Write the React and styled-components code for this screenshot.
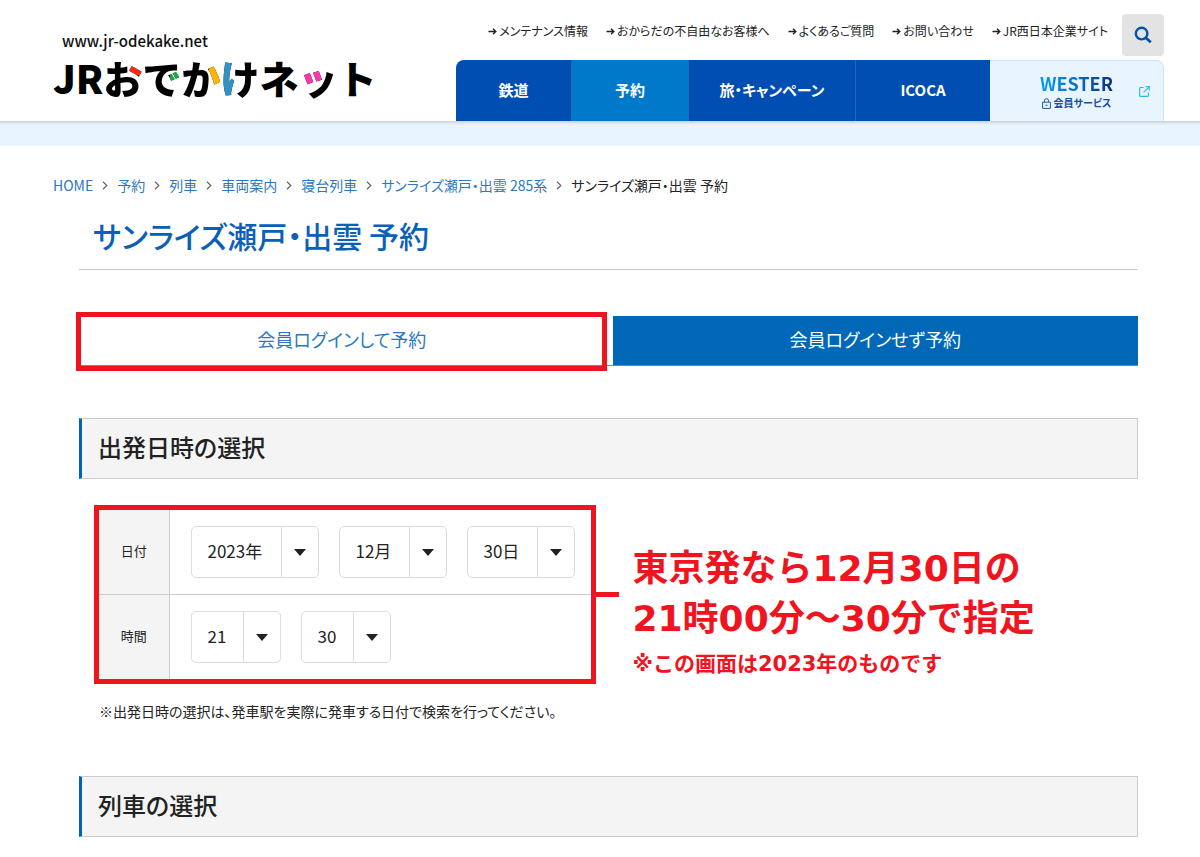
import React, { useState } from "react";
import styled, { createGlobalStyle, css } from "styled-components";

const utilityLinks = [
    "メンテナンス情報",
    "おからだの不自由なお客様へ",
    "よくあるご質問",
    "お問い合わせ",
    "JR西日本企業サイト",
];

const navItems = ["鉄道", "予約", "旅・キャンペーン", "ICOCA"];

const crumbs = [
    "HOME",
    "予約",
    "列車",
    "車両案内",
    "寝台列車",
    "サンライズ瀬戸・出雲 285系",
];

// each accent colours one stroke of its letter
const logoLetters = [
    { text: "JR" },
    { text: "お", color: "#ff2a12", place: "100% 0 / 34% 20px" },
    { text: "で", color: "#18b04a", place: "100% 17px / 28% 15px" },
    { text: "か", color: "#ffb400", place: "100% 0 / 30% 32px" },
    { text: "け", color: "#3292c4", place: "0 0 / 36% 100%" },
    { text: "ネ" },
    { text: "ッ", color: "#fb37b0", place: "0 0 / 58% 29px" },
    { text: "ト" },
];

const SmallArrow = () => (
    <svg width="9" height="9" viewBox="0 0 9 9" fill="none" aria-hidden="true">
        <path
            d="M0.5 4.5H8M5 1.8L7.8 4.5L5 7.2"
            stroke="#222"
            strokeWidth="1.4"
        />
    </svg>
);

const SearchIcon = () => (
    <svg width="18" height="18" viewBox="0 0 18 18" fill="none">
        <circle cx="7.6" cy="7.6" r="5.8" stroke="#0050b4" strokeWidth="2.4" />
        <path d="M12 12L16.8 16.2" stroke="#0050b4" strokeWidth="2.8" />
    </svg>
);

const LockIcon = () => (
    <svg width="9" height="11" viewBox="0 0 9 11" fill="none">
        <path
            d="M2.4 4V2.8a2.1 2.1 0 0 1 4.2 0V4M0.6 4.2H8.4V10.4H0.6ZM3.4 7.3H5.6"
            stroke="#1c5aa8"
        />
    </svg>
);

const ExternalIcon = () => (
    <svg width="11" height="11" viewBox="0 0 11 11" fill="none">
        <path
            d="M4.6 1.5H1.6a1 1 0 0 0-1 1V9.4a1 1 0 0 0 1 1H8.4a1 1 0 0 0 1-1V6.4M6.5 0.7H10.3V4.5M10.2 0.8L4.6 6.4"
            stroke="#2bbdf0"
            strokeWidth="1.2"
        />
    </svg>
);

const Chevron = () => (
    <svg width="6" height="9" viewBox="0 0 6 9" fill="none" aria-hidden="true">
        <path d="M1 0.8L4.8 4.5L1 8.2" stroke="#666" strokeWidth="1.2" />
    </svg>
);

function SelectBox({ label, size, value, options }) {
    const [current, setCurrent] = useState(value);

    return (
        <SelectWrap $size={size}>
            <Select
                aria-label={label}
                value={current}
                onChange={(e) => setCurrent(e.target.value)}
            >
                {options.map((option) => (
                    <option key={option}>{option}</option>
                ))}
            </Select>
            <SelectArrow aria-hidden="true">
                <svg width="12" height="7" viewBox="0 0 12 7">
                    <path d="M0 0H12L6 7Z" fill="#222" />
                </svg>
            </SelectArrow>
        </SelectWrap>
    );
}

function App() {
    return (
        <>
            <GlobalStyle />
            <Header>
                <LogoLink href="#">
                    <LogoUrl>www.jr-odekake.net</LogoUrl>
                    <LogoName>
                        {logoLetters.map((letter) => (
                            <LogoLetter
                                key={letter.text}
                                $color={letter.color}
                                $place={letter.place}
                            >
                                {letter.text}
                            </LogoLetter>
                        ))}
                    </LogoName>
                </LogoLink>
                <HeaderRight>
                    <UtilityBar>
                        <UtilityList>
                            {utilityLinks.map((text) => (
                                <UtilityLink href="#" key={text}>
                                    <SmallArrow />
                                    {text}
                                </UtilityLink>
                            ))}
                        </UtilityList>
                        <SearchButton aria-label="検索">
                            <SearchIcon />
                        </SearchButton>
                    </UtilityBar>
                    <Nav>
                        {navItems.map((text) => (
                            <NavLink
                                href="#"
                                key={text}
                                $active={text === "予約"}
                            >
                                {text}
                            </NavLink>
                        ))}
                        <WesterLink href="#">
                            <span />
                            <WesterBody>
                                <WesterName>WESTER</WesterName>
                                <WesterSub>
                                    <LockIcon />
                                    会員サービス
                                </WesterSub>
                            </WesterBody>
                            <ExternalIcon />
                        </WesterLink>
                    </Nav>
                </HeaderRight>
            </Header>
            <Band />
            <Breadcrumb>
                {crumbs.map((text) => (
                    <React.Fragment key={text}>
                        <CrumbLink href="#">{text}</CrumbLink>
                        <Chevron />
                    </React.Fragment>
                ))}
                <span>サンライズ瀬戸・出雲 予約</span>
            </Breadcrumb>
            <Main>
                <Title>サンライズ瀬戸・出雲 予約</Title>
                <Tabs>
                    <Tab $marked>会員ログインして予約</Tab>
                    <Tab $filled>会員ログインせず予約</Tab>
                </Tabs>
                <SectionHeading>出発日時の選択</SectionHeading>
                <DateArea>
                    <MarkedBox>
                        <DateTable>
                            <tbody>
                                <tr>
                                    <HeadCell scope="row">日付</HeadCell>
                                    <BodyCell>
                                        <Selects>
                                            <SelectBox
                                                label="年"
                                                size="large"
                                                value="2023年"
                                                options={["2023年", "2024年"]}
                                            />
                                            <SelectBox
                                                label="月"
                                                size="medium"
                                                value="12月"
                                                options={["11月", "12月"]}
                                            />
                                            <SelectBox
                                                label="日"
                                                size="medium"
                                                value="30日"
                                                options={["29日", "30日", "31日"]}
                                            />
                                        </Selects>
                                    </BodyCell>
                                </tr>
                                <tr>
                                    <HeadCell scope="row">時間</HeadCell>
                                    <BodyCell>
                                        <Selects>
                                            <SelectBox
                                                label="時"
                                                size="small"
                                                value="21"
                                                options={["20", "21", "22"]}
                                            />
                                            <SelectBox
                                                label="分"
                                                size="small"
                                                value="30"
                                                options={["00", "30"]}
                                            />
                                        </Selects>
                                    </BodyCell>
                                </tr>
                            </tbody>
                        </DateTable>
                    </MarkedBox>
                    <Connector />
                    <Callout>
                        <CalloutLine>東京発なら12月30日の</CalloutLine>
                        <CalloutLine>21時00分～30分で指定</CalloutLine>
                        <CalloutNote>※この画面は2023年のものです</CalloutNote>
                    </Callout>
                </DateArea>
                <Note>
                    ※出発日時の選択は、発車駅を実際に発車する日付で検索を行ってください。
                </Note>
                <SectionHeading>列車の選択</SectionHeading>
            </Main>
        </>
    );
}

export default App;

const GlobalStyle = createGlobalStyle`
    * {
        box-sizing: border-box;
    }
    body {
        margin: 0;
        background: #fff;
        color: #222;
        font-family: "Noto Sans CJK JP", sans-serif;
        font-feature-settings: "palt";
    }
    a {
        color: inherit;
        text-decoration: none;
    }
    button,
    select {
        font: inherit;
        font-feature-settings: inherit;
    }
    svg {
        flex: none;
    }
`;

const Header = styled.header`
    display: flex;
    justify-content: space-between;
    padding: 14px 36px 0 53px;
    background: #fff;
    border-bottom: 1px solid #ccd3da;
`;
const LogoLink = styled.a`
    padding-top: 17px;
    color: #000;
`;
const LogoUrl = styled.div`
    padding-left: 9px;
    font-size: 15px;
    line-height: 20px;
    font-weight: 500;
    color: #111;
`;
const LogoName = styled.div`
    display: flex;
    padding-top: 4px;
    font-size: 39px;
    line-height: 44px;
    font-weight: 900;
    font-feature-settings: normal;
`;
const LogoLetter = styled.span`
    ${(props) =>
        props.$color &&
        css`
            color: transparent;
            background:
                linear-gradient(${props.$color}, ${props.$color})
                    ${props.$place} no-repeat,
                linear-gradient(#000, #000);
            background-clip: text;
        `}
`;
const HeaderRight = styled.div`
    width: 64%;
    display: flex;
    flex-direction: column;
    align-items: flex-end;
`;
const UtilityBar = styled.div`
    display: flex;
    align-items: flex-start;
    gap: 14px;
    margin-bottom: 4px;
`;
const UtilityList = styled.div`
    display: flex;
    gap: 18px;
    padding-top: 8px;
`;
const UtilityLink = styled.a`
    display: flex;
    align-items: center;
    gap: 2px;
    font-size: 12px;
    line-height: 18px;
    white-space: nowrap;
`;
const SearchButton = styled.button`
    display: flex;
    align-items: center;
    justify-content: center;
    width: 42px;
    height: 42px;
    padding: 0;
    border: 0;
    border-radius: 4px;
    background: #e3e3e3;
    cursor: pointer;
`;
const Nav = styled.nav`
    width: 100%;
    max-width: 708px;
    height: 61px;
    display: grid;
    grid-template-columns: 116fr 117fr 167fr 134fr 174fr;
`;
const NavLink = styled.a`
    display: flex;
    align-items: center;
    justify-content: center;
    padding-bottom: 2px;
    border-right: 1px solid #1f68bf;
    background: ${(props) => (props.$active ? "#0079cb" : "#004eb2")};
    color: #fff;
    font-size: 15px;
    font-weight: 700;
    &:first-child {
        border-radius: 8px 0 0 0;
    }
    &:nth-child(4) {
        border-right: 0;
    }
`;
const WesterLink = styled.a`
    display: grid;
    grid-template-columns: 1fr auto 1fr;
    align-items: center;
    justify-items: end;
    padding: 0 13px;
    border: 1px solid #c9e6fa;
    border-width: 1px 1px 0 0;
    border-radius: 0 8px 0 0;
    background: #e8f5fe;
`;
const WesterBody = styled.span`
    display: flex;
    flex-direction: column;
    align-items: center;
`;
const WesterName = styled.span`
    font-size: 18px;
    line-height: 24px;
    font-weight: 700;
    color: transparent;
    background: linear-gradient(90deg, #0aa0ec, #0a6cc4 50%, #0a2f80);
    background-clip: text;
`;
const WesterSub = styled.span`
    display: flex;
    align-items: center;
    gap: 3px;
    font-size: 10px;
    line-height: 16px;
    font-weight: 700;
    color: #1c4f9c;
`;
const Band = styled.div`
    height: 24px;
    background: linear-gradient(#d3dce4, #e8f5fe 3px);
`;
const Breadcrumb = styled.nav`
    display: flex;
    align-items: center;
    gap: 9px;
    padding: 29px 53px 0;
    font-size: 14px;
    line-height: 20px;
    white-space: nowrap;
`;
const CrumbLink = styled.a`
    color: #2b78c0;
`;
const Main = styled.main`
    padding: 0 62px 20px 79px;
`;
const Title = styled.h1`
    margin: 0;
    padding: 16px 14px 10px;
    border-bottom: 1px solid #ccc;
    color: #0a60b8;
    font-size: 30px;
    line-height: 48px;
    font-weight: 500;
`;
const Tabs = styled.div`
    display: grid;
    grid-template-columns: 1fr 1fr;
    gap: 8px;
    margin: 46px 0 52px;
    border-bottom: 1px solid #4a94cf;
`;
const Tab = styled.button`
    position: relative;
    height: 49px;
    padding: 0 0 4px;
    border: 0;
    background: ${(props) => (props.$filled ? "#0068b7" : "#fff")};
    color: ${(props) => (props.$filled ? "#fff" : "#2b78c0")};
    font-size: 18px;
    cursor: pointer;
    ${(props) =>
        props.$marked &&
        css`
            &::after {
                content: "";
                position: absolute;
                inset: -4px -2px -6px -3px;
                border: 5px solid #f0141e;
            }
        `}
`;
const SectionHeading = styled.h2`
    margin: 0;
    padding: 0 16px 4px;
    border: 1px solid #ccc;
    border-left: 3px solid #0063b8;
    background: #f4f4f4;
    font-size: 24px;
    line-height: 55px;
    font-weight: 500;
`;
const DateArea = styled.div`
    display: flex;
    align-items: center;
    padding: 26px 0 0 15px;
`;
const MarkedBox = styled.div`
    flex: none;
    border: 5px solid #f0141e;
`;
const DateTable = styled.table`
    border-collapse: collapse;
    tr + tr > * {
        border-top: 1px solid #ccc;
    }
`;
const HeadCell = styled.th`
    width: 70px;
    padding: 0 0 4px;
    border-right: 1px solid #ccc;
    background: #f4f4f4;
    font-size: 13px;
    font-weight: 400;
`;
const BodyCell = styled.td`
    padding: 16px 16px 16px 21px;
`;
const Selects = styled.div`
    display: flex;
    gap: 20px;
`;
const selectWidths = { small: "90px", medium: "108px", large: "128px" };
const SelectWrap = styled.div`
    position: relative;
    width: ${(props) => selectWidths[props.$size]};
    height: 52px;
    border: 1px solid #ddd;
    border-radius: 5px;
    background: #fff;
`;
const Select = styled.select`
    appearance: none;
    width: 100%;
    height: 100%;
    padding: 0 36px 4px 16px;
    border: 0;
    background: transparent;
    color: #222;
    font-size: 17px;
`;
const SelectArrow = styled.span`
    position: absolute;
    top: 0;
    right: 0;
    bottom: 0;
    width: 37px;
    display: flex;
    align-items: center;
    justify-content: center;
    border-left: 1px solid #ddd;
    pointer-events: none;
`;
const Connector = styled.div`
    flex: none;
    width: 23px;
    height: 5px;
    background: #f0141e;
`;
const Callout = styled.div`
    align-self: flex-end;
    padding-left: 14px;
    color: #f0141e;
    font-family: "DejaVu Sans", "Noto Sans CJK JP", sans-serif;
    font-feature-settings: normal;
    font-weight: 700;
    white-space: nowrap;
`;
const CalloutLine = styled.p`
    margin: 0;
    font-size: 36px;
    line-height: 50px;
`;
const CalloutNote = styled.p`
    margin: 0;
    font-size: 21px;
    line-height: 40px;
`;
const Note = styled.p`
    margin: 17px 0 55px;
    padding-left: 20px;
    font-size: 14px;
    line-height: 20px;
`;
